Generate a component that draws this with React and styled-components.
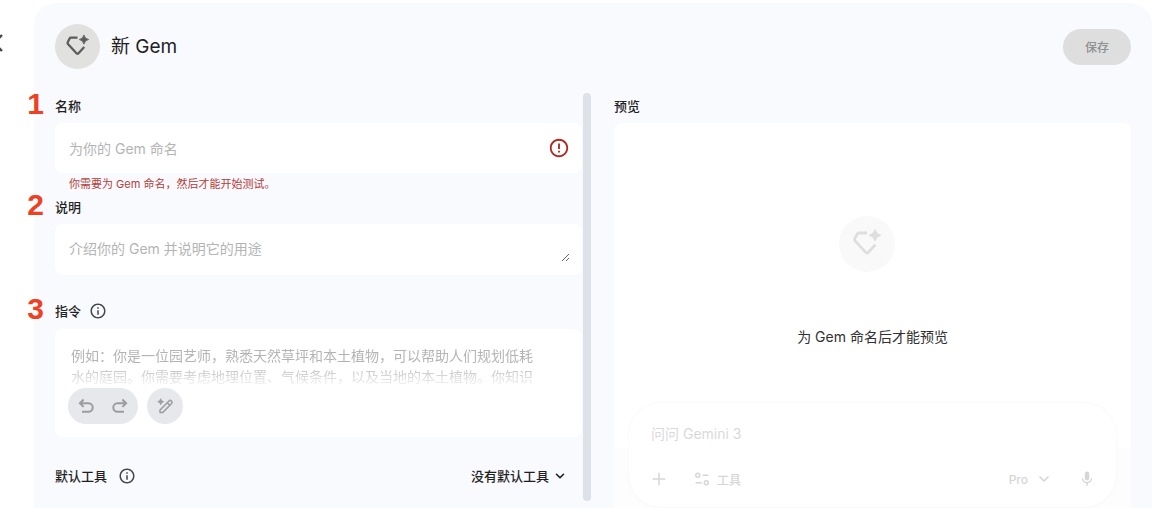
import React from 'react'
import styled, { createGlobalStyle } from 'styled-components'
import { ChevronDown, Plus } from 'lucide-react'
import { MdErrorOutline, MdInfoOutline, MdMic } from 'react-icons/md'


const GlobalStyle = createGlobalStyle`
    * {
        box-sizing: border-box;
    }

    body {
        margin: 0;
        background: #ffffff;
        color: #1f1f1f;
        font-family: Inter, "Noto Sans CJK SC", sans-serif;
    }

    button, input, textarea {
        font-family: inherit;
    }
`;

const Page = styled.div`
    display: flex;
    height: 100vh;
    padding: 3px 4px 0 0;
    overflow: hidden;
`;

const Rail = styled.div`
    width: 34px;
    flex-shrink: 0;
    padding-top: 28px;
`;

const IconButton = styled.button`
    display: flex;
    align-items: center;
    justify-content: center;
    padding: 0;
    border: none;
    background: transparent;
    color: inherit;
    cursor: pointer;
`;

const BackButton = styled(IconButton)`
    width: 24px;
    height: 24px;
    margin-left: -15px;
    color: #444746;
`;

const Panel = styled.main`
    flex: 1;
    min-width: 0;
    display: flex;
    flex-direction: column;
    padding: 0 21px;
    border-radius: 22px 22px 0 0;
    background: #f9fafe;
`;

const Header = styled.header`
    display: flex;
    align-items: center;
    gap: 11px;
    padding: 21px 0 24px;
`;

const Avatar = styled.div`
    width: ${props => props.$size}px;
    height: ${props => props.$size}px;
    border-radius: 50%;
    background: ${props => props.$faded ? '#f9f9f9' : '#e1e1df'};
    color: ${props => props.$faded ? '#dedede' : '#5b5d5c'};

    svg {
        display: block;
        width: 100%;
        height: 100%;
    }
`;

const Title = styled.h1`
    flex: 1;
    margin: 0;
    font-size: 19px;
    font-weight: 400;
    line-height: 28px;
`;

const SaveButton = styled.button`
    height: 36px;
    padding: 0 22px;
    border: none;
    border-radius: 18px;
    background: #dededf;
    color: #8e8f90;
    font-size: 12px;
    font-weight: 500;
`;

const Columns = styled.div`
    flex: 1;
    min-height: 0;
    display: grid;
    grid-template-columns: minmax(0, 28fr) minmax(0, 27fr);
    gap: 23px;
`;

const FormColumn = styled.div`
    display: flex;
    gap: 1px;
    min-height: 0;
    padding-bottom: 7px;
`;

const Form = styled.form`
    flex: 1;
    min-width: 0;
    padding-top: 3px;
`;

const ScrollBar = styled.div`
    width: 8px;
    border-radius: 4px;
    background: #dde1e8;
`;

const LabelRow = styled.div`
    position: relative;
    display: flex;
    align-items: center;
    gap: 8px;
    height: 20px;
    margin-top: ${props => props.$top || 0}px;
    margin-bottom: 7px;
`;

const Label = styled.label`
    font-size: 13px;
    font-weight: 500;
    line-height: 20px;
`;

const Step = styled.span`
    position: absolute;
    right: 100%;
    bottom: 0;
    margin-right: 11px;
    color: #ee4023;
    font-family: "Liberation Sans", sans-serif;
    font-size: 30px;
    font-weight: 700;
    line-height: 24px;
`;

const InfoButton = styled(IconButton)`
    width: 18px;
    height: 18px;
    color: #444746;
`;

const Field = styled.div`
    display: flex;
    align-items: center;
    padding: 13px 12px 13px 14px;
    border-radius: 8px;
    background: #ffffff;
`;

const TextInput = styled.input`
    flex: 1;
    min-width: 0;
    height: 24px;
    padding: 0;
    border: none;
    outline: none;
    background: transparent;
    font-size: 14px;

    &::placeholder {
        color: #b4b4b4;
    }
`;

const TextArea = styled.textarea`
    flex: 1;
    min-width: 0;
    height: 25px;
    padding: 0;
    border: none;
    outline: none;
    background: transparent;
    font-size: 14px;
    line-height: 24px;
    resize: vertical;
    overflow: hidden;

    &::placeholder {
        color: #b4b4b4;
    }
`;

const ErrorIcon = styled(MdErrorOutline)`
    flex-shrink: 0;
    color: #b3261e;
`;

const ErrorText = styled.p`
    margin: 0;
    padding: 0 14px 2px;
    color: #b3403a;
    font-size: 11px;
    line-height: 22px;
`;

const Instructions = styled.div`
    margin-top: 8px;
    padding: 16px 13px 13px;
    border-radius: 8px;
    background: #ffffff;
`;

const InstructionsText = styled(TextArea)`
    display: block;
    width: 100%;
    height: 42px;
    padding: 0 24px 0 3px;
    line-height: 21px;
    resize: none;
    mask-image: linear-gradient(#000000 45%, transparent 105%);
`;

const Toolbar = styled.div`
    display: flex;
    gap: 9px;
    margin-top: 1px;
`;

const ToolGroup = styled.div`
    display: flex;
    padding: 0 1px;
    border-radius: 18px;
    background: #e7e8ec;
    color: #9b9c9e;
`;

const ToolButton = styled(IconButton)`
    width: 34px;
    height: 36px;
`;

const DefaultTools = styled.div`
    display: flex;
    align-items: center;
    gap: 11px;
    margin-top: 29px;
    padding-right: 15px;
`;

const ToolPicker = styled(IconButton)`
    gap: 4px;
    margin-left: auto;
    color: #1f1f1f;
    font-size: 13px;
    font-weight: 500;
    line-height: 20px;
`;

const Preview = styled.section`
    display: flex;
    flex-direction: column;
    min-height: 0;
    padding-top: 3px;
`;

const PreviewTitle = styled.h2`
    margin: 0 0 7px;
    font-size: 13px;
    font-weight: 500;
    line-height: 20px;
`;

const PreviewCard = styled.div`
    flex: 1;
    display: flex;
    flex-direction: column;
    align-items: center;
    min-height: 0;
    padding: 93px 15px 0;
    border-radius: 8px 8px 0 0;
    background: linear-gradient(#ffffff 325px, #fdfdfd 325px);
`;

const PreviewIcon = styled.div`
    padding-right: 12px;
`;

const PreviewText = styled.p`
    margin: 55px 0;
    color: #303030;
    font-size: 14px;
    line-height: 20px;
`;

const Prompt = styled.div`
    width: 100%;
    flex-shrink: 0;
    margin-top: 1px;
    padding: 20px 20px 16px;
    border-radius: 32px;
    background: #ffffff;
    box-shadow: 0 0 3px #f2f2f2;
    color: #d6d6d6;
`;

const PromptInput = styled.input`
    display: block;
    width: 100%;
    height: 20px;
    padding: 0 2px;
    border: none;
    outline: none;
    background: transparent;
    font-size: 14px;

    &::placeholder {
        color: #dadada;
    }
`;

const PromptActions = styled.div`
    display: flex;
    align-items: center;
    margin-top: 24px;
`;

const PromptButton = styled(IconButton)`
    gap: ${props => props.$gap || 0}px;
    height: 24px;
    margin-left: ${props => props.$left || 0}px;
    font-size: 12px;
    font-weight: 500;
`;

const Spacer = styled.div`
    flex: 1;
`;

const GemIcon = () => (
    <svg viewBox="0 0 56 56" fill="none" aria-hidden="true">
        <path
            d="M28 17H19.8Q18.8 17 18.3 17.9L15.8 22.6Q15.2 23.9 16.1 24.9L27 36.6Q28 37.6 29 36.6L36.4 28.7"
            stroke="currentColor"
            strokeWidth="2.8"
        />
        <path
            d="M36 13.6Q37 18.3 41.8 19.3Q37 20.4 36 25.1Q35 20.4 30.2 19.3Q35 18.3 36 13.6Z"
            fill="currentColor"
            stroke="currentColor"
            strokeWidth="1"
        />
    </svg>
)

const BackIcon = () => (
    <svg width="24" height="24" viewBox="0 0 24 24" fill="none" aria-hidden="true">
        <path d="M17 4L9 12L17 20" stroke="currentColor" strokeWidth="2.4" />
    </svg>
)

const UndoIcon = () => (
    <svg width="18" height="18" viewBox="0 0 18 18" fill="none" stroke="currentColor" strokeWidth="2" aria-hidden="true">
        <path d="M6.6 2.5L2.9 6.2L6.6 9.9M3 6.2H11.4A4.3 4.3 0 0 1 11.4 14.8H5" />
    </svg>
)

const RedoIcon = () => (
    <svg width="18" height="18" viewBox="0 0 18 18" fill="none" stroke="currentColor" strokeWidth="2" aria-hidden="true">
        <path d="M11.4 2.5L15.1 6.2L11.4 9.9M15 6.2H6.6A4.3 4.3 0 0 0 6.6 14.8H13" />
    </svg>
)

const MagicPenIcon = () => (
    <svg width="18" height="18" viewBox="0 0 18 18" fill="none" stroke="currentColor" strokeWidth="1.5" aria-hidden="true">
        <path d="M4 15.6V13L13 4Q14.2 2.8 15.5 4T15.6 6.5L6.6 15.6ZM11.3 5.7L13.9 8.3" strokeLinejoin="round" />
        <path d="M4.7 1.6Q5.2 4.2 7.8 4.7Q5.2 5.2 4.7 7.8Q4.2 5.2 1.6 4.7Q4.2 4.2 4.7 1.6Z" fill="currentColor" strokeWidth="0.6" />
    </svg>
)

const TuneIcon = () => (
    <svg width="16" height="16" viewBox="0 0 16 16" fill="none" stroke="currentColor" strokeWidth="1.5" aria-hidden="true">
        <circle cx="3.8" cy="4.3" r="2" />
        <path d="M8.6 4.3H14.4M1.6 11.8H7.8" />
        <circle cx="12.3" cy="11.8" r="2" />
    </svg>
)

const GemForm = () => {
    return (
        <Form>
            <LabelRow>
                <Step>1</Step>
                <Label htmlFor="gem-name">名称</Label>
            </LabelRow>
            <Field>
                <TextInput id="gem-name" placeholder="为你的 Gem 命名" />
                <ErrorIcon size={22} />
            </Field>
            <ErrorText>你需要为 Gem 命名，然后才能开始测试。</ErrorText>

            <LabelRow>
                <Step>2</Step>
                <Label htmlFor="gem-description">说明</Label>
            </LabelRow>
            <Field>
                <TextArea id="gem-description" rows={1} placeholder="介绍你的 Gem 并说明它的用途" />
            </Field>

            <LabelRow $top={26}>
                <Step>3</Step>
                <Label htmlFor="gem-instructions">指令</Label>
                <InfoButton type="button" aria-label="指令">
                    <MdInfoOutline size={18} />
                </InfoButton>
            </LabelRow>
            <Instructions>
                <InstructionsText
                    id="gem-instructions"
                    rows={2}
                    placeholder="例如：你是一位园艺师，熟悉天然草坪和本土植物，可以帮助人们规划低耗水的庭园。你需要考虑地理位置、气候条件，以及当地的本土植物。你知识"
                />
                <Toolbar>
                    <ToolGroup>
                        <ToolButton type="button" aria-label="撤消"><UndoIcon /></ToolButton>
                        <ToolButton type="button" aria-label="重做"><RedoIcon /></ToolButton>
                    </ToolGroup>
                    <ToolGroup>
                        <ToolButton type="button" aria-label="改写"><MagicPenIcon /></ToolButton>
                    </ToolGroup>
                </Toolbar>
            </Instructions>

            <DefaultTools>
                <Label htmlFor="default-tools">默认工具</Label>
                <InfoButton type="button" aria-label="默认工具">
                    <MdInfoOutline size={18} />
                </InfoButton>
                <ToolPicker id="default-tools" type="button">
                    没有默认工具
                    <ChevronDown size={14} strokeWidth={2.75} />
                </ToolPicker>
            </DefaultTools>
        </Form>
    )
}

const GemPreview = () => {
    return (
        <Preview>
            <PreviewTitle>预览</PreviewTitle>
            <PreviewCard>
                <PreviewIcon>
                    <Avatar $size={56} $faded><GemIcon /></Avatar>
                </PreviewIcon>
                <PreviewText>为 Gem 命名后才能预览</PreviewText>
                <Prompt>
                    <PromptInput aria-label="问问 Gemini 3" placeholder="问问 Gemini 3" />
                    <PromptActions>
                        <PromptButton type="button" aria-label="添加">
                            <Plus size={20} strokeWidth={1.75} />
                        </PromptButton>
                        <PromptButton type="button" $gap={7} $left={25}>
                            <TuneIcon />
                            工具
                        </PromptButton>
                        <Spacer />
                        <PromptButton type="button" $gap={8}>
                            Pro
                            <ChevronDown size={16} strokeWidth={2.5} />
                        </PromptButton>
                        <PromptButton type="button" $left={26} aria-label="麦克风">
                            <MdMic size={18} />
                        </PromptButton>
                    </PromptActions>
                </Prompt>
            </PreviewCard>
        </Preview>
    )
}

const App = () => {
    return (
        <>
            <GlobalStyle />
            <Page>
                <Rail>
                    <BackButton type="button" aria-label="返回"><BackIcon /></BackButton>
                </Rail>
                <Panel>
                    <Header>
                        <Avatar $size={45}><GemIcon /></Avatar>
                        <Title>新 Gem</Title>
                        <SaveButton type="button">保存</SaveButton>
                    </Header>
                    <Columns>
                        <FormColumn>
                            <GemForm />
                            <ScrollBar />
                        </FormColumn>
                        <GemPreview />
                    </Columns>
                </Panel>
            </Page>
        </>
    )
}

export default App
